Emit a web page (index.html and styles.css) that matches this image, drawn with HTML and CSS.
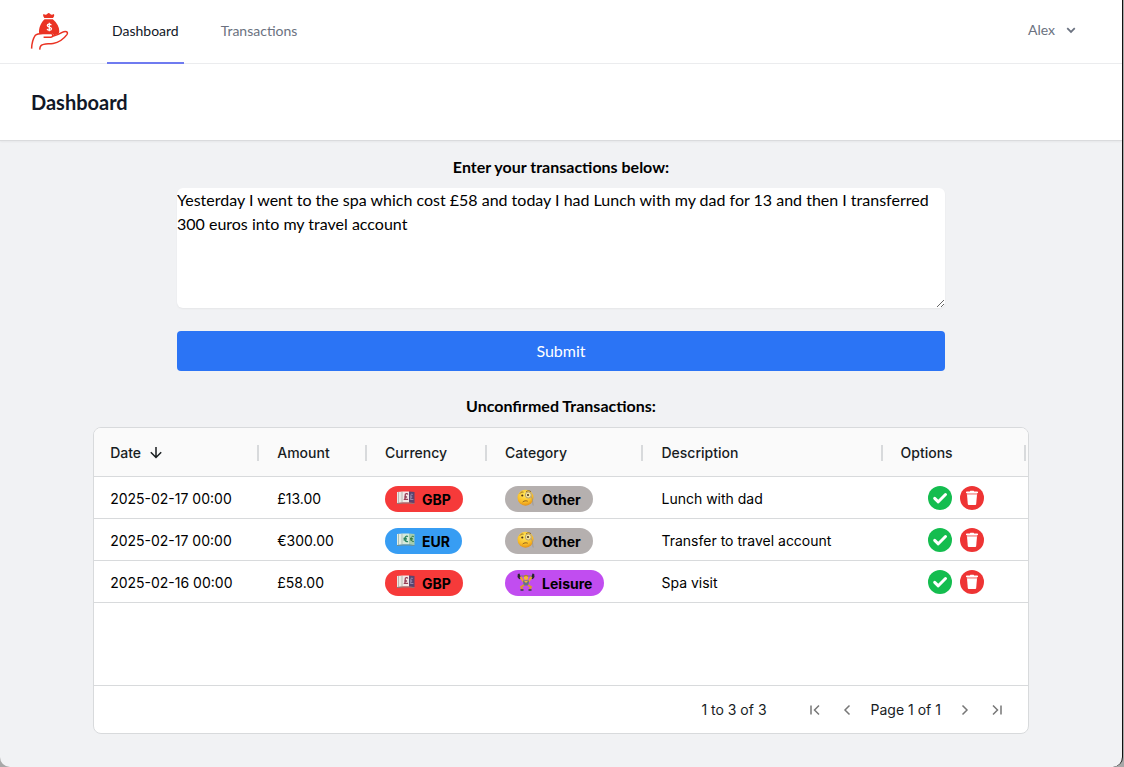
FILE: index.html
```html
<!DOCTYPE html>
<html lang="en">
<head>
<meta charset="utf-8">
<meta name="viewport" content="width=device-width, initial-scale=1">
<title>Dashboard</title>
<link rel="stylesheet" href="styles.css">
</head>
<body>
<svg class="sprite" aria-hidden="true">
  <symbol id="tick" viewBox="0 0 24 24"><circle cx="12" cy="12" r="12" fill="#14bd4f"/><path d="M6.700 12.300l3.600 3.500 7.200-7.300" fill="none" stroke="#fff" stroke-width="3" stroke-linecap="round" stroke-linejoin="round"/></symbol>
  <symbol id="bin" viewBox="0 0 24 24"><circle cx="12" cy="12" r="12" fill="#ee3434"/><path d="M6 6.2c0-.6.4-.8 1-.8h2.8l.6-.6h3.2l.6.6H17c.6 0 1 .2 1 .8V7H6z" fill="#fff"/><path d="M6.7 7h10.6v1.5H6.7z" fill="#f8a9a9"/><path d="M7 8.5h10l-.8 9.4c-.1.8-.5 1.100-1.200 1.100H9c-.7 0-1.100-.3-1.200-1.100z" fill="#fff"/></symbol>
  <symbol id="pound" viewBox="0 0 18 14"><path d="M0 1l6-.6v11L0 12z" fill="#e9e8e4"/><path d="M1.5 1v10.8M5 .6v10.8" stroke="#aaa39f" stroke-width=".7"/><path d="M6 .5h6v11H6z" fill="#f3e9e8"/><path d="M12 .5l5.5.6v11l-5.500-.6z" fill="#594570"/><path d="M10.800 3.500c-.5-1.300-2.800-1.100-2.600.6.1 1.200.5 2.700-.6 4.300h3.500M7.300 6h2.800" fill="none" stroke="#963d55" stroke-width="1.300"/><path d="M15.800 3.500c-1.500-1-2.200 0-1.900 1.500.2 1.400.1 2.700-.5 3.500h3M13.300 6h2" fill="none" stroke="#a99abb" stroke-width=".8"/><path d="M0 12l6-.6 6 .2 5.500.6V13L12 12.500H6L0 13z" fill="#887c80"/></symbol>
  <symbol id="euro" viewBox="0 0 18 14"><path d="M0 1l6-.6v11L0 12z" fill="#e4ede5"/><path d="M1.500 1v10.800M5 .6v10.800" stroke="#8fac9d" stroke-width=".7"/><path d="M6 .5h6v11H6z" fill="#d7eadb"/><path d="M12 .5l5.500.6v11l-5.500-.6z" fill="#a6cdae"/><path d="M11 3.500c-4-2.200-4.500 6.700 0 5M6.500 5.300h3.300M6.500 6.800h3.300" fill="none" stroke="#288360" stroke-width="1.200"/><path d="M16.800 3.500c-3.500-1.800-4 6 0 5M13 5.500h2.800M13 6.900h2.800" fill="none" stroke="#347c42" stroke-width="1"/><path d="M0 12l6-.6 6 .2 5.500.6V13L12 12.500H6L0 13z" fill="#718f8b"/></symbol>
  <symbol id="face" viewBox="0 0 18 18"><defs><radialGradient id="skin" cx=".45" cy=".3" r=".75"><stop offset="0" stop-color="#ffe85c"/><stop offset=".65" stop-color="#fbbd24"/><stop offset="1" stop-color="#dd8618"/></radialGradient></defs><circle cx="8.500" cy="8.700" r="8" fill="url(#skin)"/><path d="M3 4.500c.8-1.300 2-1.700 3.500-1.300M9 3c1.500-1.600 3.500-1.600 5-.3" fill="none" stroke="#79531e" stroke-width=".8"/><circle cx="5.300" cy="6.500" r="1.100" fill="#4e341b"/><circle cx="11.300" cy="6" r="3" fill="#f6e69d" stroke="#b3a27a" stroke-width="1"/><circle cx="11" cy="6" r="1.100" fill="#553a1c"/><path d="M5.700 13c1.500-1.300 3.200-1.500 5-.8" fill="none" stroke="#83521c" stroke-width=".9"/><path d="M14.300 7.500c1.700 3 1 5.500 1.900 9" fill="none" stroke="#9a958c" stroke-width=".8"/></symbol>
  <symbol id="lifter" viewBox="0 0 18 18"><path d="M2 3h14" stroke="#777b80" stroke-width="1"/><path d="M.8 1l1.800-.5 1.200 5-1.600.8L.5 4zM17.200 1L15.400.5l-1.200 5 1.600.8L17.500 4z" fill="#27272c"/><path d="M3.500 4l3 4.500h5l3-4.500" fill="none" stroke="#e9aa28" stroke-width="2"/><circle cx="9" cy="4.700" r="2.300" fill="#f4bb32"/><path d="M6.800 4c0-3 4.400-3 4.400 0L9 3z" fill="#b68227"/><path d="M6 7.500h6l-.5 5h-5z" fill="#677286"/><path d="M7 8l2 2 2-2" fill="#f4bb32"/><path d="M7 12l-3 2 1.500 2.500M11 12l3 2-1.500 2.500" fill="none" stroke="#dd9d24" stroke-width="1.900"/><path d="M3.500 17h3M11.500 17h3" stroke="#333846" stroke-width="1.500"/></symbol>
</svg>
<div class="window">
  <nav class="nav">
    <a class="logo" href="#" aria-label="Home">
      <svg viewBox="0 0 40 40" width="40" height="40"><path d="M14.300 6c-1.200-1.500-1.500-2.900-.8-3.900 1.900 1 2.800.9 3.900-.4.800-.9 1.800-.9 2.600 0 1.100 1.200 2.200 1.300 3.900.3.700 1.200.2 2.500-.9 4zM14.600 7.200h8.200c4.200 3.500 6.500 7.500 6.500 12 0 1.300-.4 2.300-1.200 3.100l-4.300 1c-.5-1.500-1.600-2.300-3.300-2.300h-6.300c-1.700 0-3.700-.1-5.100.4-.5-6 1.900-10.700 5.500-14.200z" fill="#ea3323"/><path d="M1.600 36.600c.2-5 1.300-9.800 3.500-13 1.700-1.800 4.400-2.200 7.900-2.200h7.900c2.500 0 2.600 3.900-.3 3.900h-7M22 24.500c5-1.200 7-2 10.700-4.300 2.900-1.800 6-.2 4.200 2.400-3.400 4.600-8.500 7.900-13.800 8.800-5 .8-9.600.1-12.100 2.200-1 1-1.200 2.500-1.300 4" fill="none" stroke="#ea3323" stroke-width="1.500"/><path d="M21.300 13.200c-.7-1.500-4-1.500-4 .3 0 2.100 4.200 1 4.200 3.300 0 2-3.700 2-4.400.1M19.300 10.800v8.500" fill="none" stroke="#fff" stroke-width="1.300"/></svg>
    </a>
    <a class="nav-link active" href="#">Dashboard</a>
    <a class="nav-link" href="#">Transactions</a>
    <button class="user" type="button">Alex
      <svg viewBox="0 0 20 20" width="16" height="16"><path d="M5.300 7.800L10 12.400l4.700-4.600" fill="none" stroke="currentColor" stroke-width="2.200"/></svg>
    </button>
  </nav>
  <header class="page-header"><h1>Dashboard</h1></header>
  <main>
    <form class="entry">
      <label for="entry">Enter your transactions below:</label>
      <textarea id="entry" rows="5">Yesterday I went to the spa which cost £58 and today I had Lunch with my dad for 13 and then I transferred 300 euros into my travel account</textarea>
      <button class="submit" type="button">Submit</button>
    </form>
    <h2>Unconfirmed Transactions:</h2>
    <section class="grid">
      <table>
        <colgroup><col class="c-date"><col class="c-amount"><col class="c-currency"><col class="c-category"><col class="c-description"><col class="c-options"></colgroup>
        <thead><tr>
          <th><div class="head">Date <svg viewBox="0 0 16 16" width="16" height="16"><path d="M8 2v10.500M2.800 7.300L8 12.500l5.200-5.200" fill="none" stroke="currentColor" stroke-width="1.500"/></svg></div></th>
          <th><div class="head">Amount</div></th><th><div class="head">Currency</div></th><th><div class="head">Category</div></th><th><div class="head">Description</div></th><th><div class="head">Options</div></th>
        </tr></thead>
        <tbody>
          <tr><td>2025-02-17 00:00</td><td>£13.00</td><td><span class="pill gbp"><svg><use href="#pound"/></svg>GBP</span></td><td><span class="pill other"><svg><use href="#face"/></svg>Other</span></td><td>Lunch with dad</td><td class="options"><div class="actions"><button type="button" aria-label="Confirm"><svg><use href="#tick"/></svg></button><button type="button" aria-label="Delete"><svg><use href="#bin"/></svg></button></div></td></tr>
          <tr><td>2025-02-17 00:00</td><td>€300.00</td><td><span class="pill eur"><svg><use href="#euro"/></svg>EUR</span></td><td><span class="pill other"><svg><use href="#face"/></svg>Other</span></td><td>Transfer to travel account</td><td class="options"><div class="actions"><button type="button" aria-label="Confirm"><svg><use href="#tick"/></svg></button><button type="button" aria-label="Delete"><svg><use href="#bin"/></svg></button></div></td></tr>
          <tr><td>2025-02-16 00:00</td><td>£58.00</td><td><span class="pill gbp"><svg><use href="#pound"/></svg>GBP</span></td><td><span class="pill leisure"><svg><use href="#lifter"/></svg>Leisure</span></td><td>Spa visit</td><td class="options"><div class="actions"><button type="button" aria-label="Confirm"><svg><use href="#tick"/></svg></button><button type="button" aria-label="Delete"><svg><use href="#bin"/></svg></button></div></td></tr>
        </tbody>
      </table>
      <footer class="pager">
        <span class="range">1 to 3 of 3</span>
        <button type="button" aria-label="First page"><svg viewBox="0 0 16 16"><path d="M4 3.500v9M12 3.500L7.500 8l4.500 4.500"/></svg></button>
        <button type="button" aria-label="Previous page"><svg viewBox="0 0 16 16"><path d="M10.500 3.500L6 8l4.500 4.500"/></svg></button>
        <span class="page">Page 1 of 1</span>
        <button type="button" aria-label="Next page"><svg viewBox="0 0 16 16"><path d="M5.500 3.500L10 8l-4.500 4.500"/></svg></button>
        <button type="button" aria-label="Last page"><svg viewBox="0 0 16 16"><path d="M12 3.500v9M4 3.500L8.500 8 4 12.500"/></svg></button>
      </footer>
    </section>
  </main>
</div>
</body>
</html>
```
FILE: styles.css
```css
* { box-sizing: border-box; }
body { margin: 0; background: #a8a8a8; font-family: Lato, "Liberation Sans", sans-serif; font-size: 16px; line-height: 24px; color: #000; }
button { border: 0; padding: 0; background: none; font: inherit; color: inherit; cursor: pointer; }
svg { display: block; flex: none; }
.sprite { position: absolute; width: 0; height: 0; }
.window { min-height: 100vh; margin-right: 1px; border-right: 1px solid #111; border-radius: 0 0 10px 10px; background: #f1f2f4; overflow: hidden; }
.nav { display: flex; height: 64px; padding: 0 43px 0 30px; background: #fff; border-bottom: 1px solid #ebecee; font-size: 14px; color: #6b7280; }
.logo { display: flex; align-items: center; margin-right: 37px; }
.nav-link { display: flex; align-items: center; margin-right: 32px; padding: 0 5px; border-bottom: 2px solid transparent; color: inherit; text-decoration: none; height: 64px; }
.nav-link.active { color: #111827; border-color: #6f7bf0; }
.user { display: flex; align-items: center; gap: 8px; height: 60px; margin-left: auto; }
.page-header { padding: 24px 31px; background: #fff; border-bottom: 1px solid #dadbdd; box-shadow: 0 1px 2px #0000000d; position: relative; }
h1 { margin: 0; font-size: 20px; line-height: 28px; font-weight: 700; color: #111827; }
main { padding: 14px 0 33px; }
.entry { display: flex; flex-direction: column; width: 768px; max-width: 100%; margin: 0 auto; }
.entry label, h2 { margin: 0; font-size: 16px; line-height: 24px; font-weight: 700; text-align: center; }
textarea { margin-top: 9px; padding: 0; border: 0; border-radius: 6px; background: #fff; box-shadow: 0 1px 2px #0000000d; font: inherit; color: #000; resize: vertical; outline: 0; }
.submit { height: 40px; margin: 23px 0; border-radius: 4px; background: #2b74f5; color: #fff; }
.grid { width: 83.4%; margin: 9px auto 0; border: 1px solid #d8dadc; border-radius: 8px; background: #fff; overflow: hidden; font: 14px/20px Inter, "Liberation Sans", sans-serif; color: #181d1f; }
table { width: 100%; table-layout: fixed; border-collapse: separate; border-spacing: 0; margin-bottom: 82px; }
.c-date { width: 17.9%; }
.c-amount { width: 11.55%; }
.c-currency { width: 12.85%; }
.c-category { width: 16.75%; }
.c-description { width: 25.6%; }
.c-options { width: 15.35%; }
th, td { padding: 0 0 0 16px; border-bottom: 1px solid #d8dadc; text-align: left; white-space: nowrap; }
th { height: 49px; padding-top: 1px; background: #fafafa; font-weight: 500; }
td { height: 42px; padding-top: 2px; color: #000; }
td.options { padding-top: 0; }
.head { display: flex; align-items: center; gap: 7px; height: 16px; margin-right: 2px; border-right: 2px solid #d8dadc; }
.pill { display: inline-flex; align-items: center; gap: 7px; height: 26px; padding: 2px 12px 0; border-radius: 13px; font-weight: 700; vertical-align: middle; }
.pill svg { width: 18px; height: 18px; margin-bottom: 4px; }
.gbp { background: #f63a3a; }
.eur { background: #379df3; }
.other { background: #b5b0af; }
.leisure { background: #c14df0; }
.actions { display: flex; justify-content: center; gap: 8px; padding-right: 16px; }
.actions svg { width: 24px; height: 24px; }
.pager { display: flex; align-items: center; gap: 16px; height: 48px; padding: 0 23px; border-top: 1px solid #d8dadc; }
.pager svg { width: 16px; height: 16px; fill: none; stroke: #777; stroke-width: 1.5; }
.range { margin-left: auto; margin-right: 24px; }
```
